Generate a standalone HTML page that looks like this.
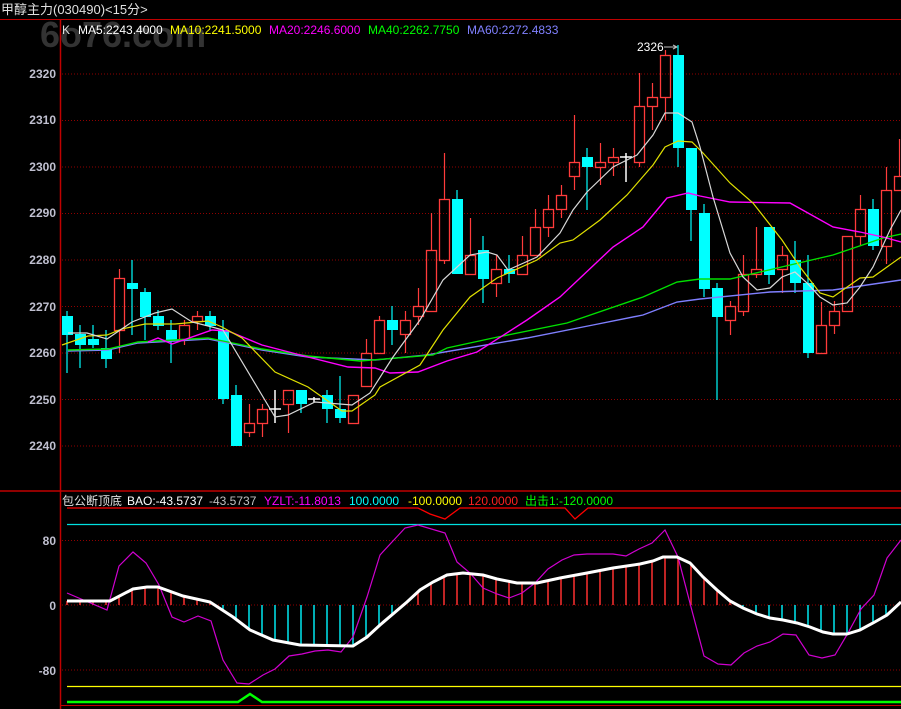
<!DOCTYPE html>
<html><head><meta charset="utf-8"><style>
html,body{margin:0;padding:0;background:#000;width:901px;height:709px;overflow:hidden}
svg{display:block}
text{font-family:"Liberation Sans","Noto Sans CJK SC",sans-serif}
</style></head><body>
<svg id="s" width="901" height="709" xmlns="http://www.w3.org/2000/svg">
<rect width="901" height="709" fill="#000"/>
<text x="40" y="47" font-size="36" fill="#333" font-weight="bold">6o76.com</text>
<text x="1" y="14" font-size="13" fill="#e0e0e0">甲醇主力(030490)&lt;15分&gt;</text>
<line x1="0" y1="19.5" x2="901" y2="19.5" stroke="#c00000"/>
<line x1="60.5" y1="19" x2="60.5" y2="709" stroke="#c00000" stroke-width="1.5"/>
<line x1="0" y1="491" x2="901" y2="491" stroke="#c00000" stroke-width="1.5"/>
<line x1="60" y1="705.5" x2="901" y2="705.5" stroke="#c00000"/>
<g font-size="12">
<text x="62" y="34" fill="#e0e0e0">K</text>
<text x="78" y="34" fill="#fff">MA5:2243.4000</text>
<text x="170" y="34" fill="#ffff00">MA10:2241.5000</text>
<text x="269" y="34" fill="#ff00ff">MA20:2246.6000</text>
<text x="368" y="34" fill="#00ff00">MA40:2262.7750</text>
<text x="467" y="34" fill="#8080ff">MA60:2272.4833</text>
</g>
<g font-size="12">
<text x="62" y="505" fill="#e0e0e0">包公断顶底</text>
<text x="127" y="505" fill="#fff">BAO:-43.5737</text>
<text x="209" y="505" fill="#c0c0c0">-43.5737</text>
<text x="264" y="505" fill="#ff00ff">YZLT:-11.8013</text>
<text x="349" y="505" fill="#00ffff">100.0000</text>
<text x="408" y="505" fill="#ffff00">-100.0000</text>
<text x="468" y="505" fill="#ff2020">120.0000</text>
<text x="525" y="505" fill="#00ff00">出击1:-120.0000</text>
</g>
<g font-size="12" font-weight="bold" fill="#c0c0d0" text-anchor="end">
<text x="56" y="78">2320</text><text x="56" y="124">2310</text><text x="56" y="171">2300</text>
<text x="56" y="217">2290</text><text x="56" y="264">2280</text><text x="56" y="311">2270</text>
<text x="56" y="357">2260</text><text x="56" y="404">2250</text><text x="56" y="450">2240</text>
<text x="56" y="545">80</text><text x="56" y="610">0</text><text x="56" y="675">-80</text>
</g>
<text x="637" y="51" font-size="12" fill="#fff">2326</text>
<line x1="664" y1="47" x2="676" y2="47" stroke="#c0c0c0"/><path d="M673 45 L677 47 L673 49" stroke="#c0c0c0" fill="none"/>
<g id="g"></g>
</svg>
<script>
var g=document.getElementById('g'),h='';
function L(x1,y1,x2,y2,c,w,d){h+='<line x1="'+x1+'" y1="'+y1+'" x2="'+x2+'" y2="'+y2+'" stroke="'+c+'" stroke-width="'+(w||1)+'"'+(d?' stroke-dasharray="'+d+'"':'')+'/>';}
function P(pts,c,w){h+='<polyline fill="none" stroke="'+c+'" stroke-width="'+(w||1)+'" points="'+pts+'"/>';}
for(var k=0;k<9;k++){var y=74+46.5*k;L(62,y,901,y,'#900000',1,'1,2');}
[540.5,605,670].forEach(function(y){L(62,y,901,y,'#900000',1,'1,2');});
L(67,524.5,901,524.5,'#00e0e0',1.3);
L(67,686.5,901,686.5,'#ffff00',1.3);
P('67,702 238,702 250,694 262,702 901,702','#00ff00',2.5);
P('67,508 418,508 430,514 445,519 460,508 565,508 575,519 588,508 901,508','#ff0000',1.3);
var C=[[316,335,311,373,'c'],[334,345,325,368,'c'],[339,345,325,348,'c'],[348,359,330,368,'c'],[278,330,269,353,'r'],[283,289,260,335,'c'],[292,317,288,340,'c'],[316,326,310,330,'c'],[330,340,320,363,'c'],[325,339,320,345,'r'],[316,321,311,330,'r'],[316,326,311,330,'c'],[330,399,320,404,'c'],[395,446,385,446,'c'],[423,432,404,437,'r'],[409,423,404,437,'r'],[409,409,390,423,'w'],[390,404,390,433,'r'],[390,404,390,413,'c'],[399,399,397,402,'w'],[395,409,390,423,'c'],[409,418,376,423,'c'],[395,423,395,423,'r'],[353,386,339,386,'r'],[320,353,316,353,'r'],[320,330,306,345,'c'],[320,334,311,353,'r'],[306,316,288,325,'r'],[250,311,213,311,'r'],[199,260,153,264,'r'],[199,274,190,274,'c'],[255,274,218,274,'r'],[250,279,236,303,'c'],[269,283,255,297,'r'],[269,274,255,283,'c'],[255,274,236,274,'r'],[227,255,209,255,'r'],[209,227,195,237,'r'],[195,209,185,218,'r'],[162,176,115,190,'r'],[157,167,148,210,'c'],[162,167,143,185,'r'],[157,162,148,176,'r'],[157,157,153,182,'w'],[106,162,73,167,'r'],[97,106,83,130,'r'],[55,97,50,120,'r'],[55,148,45,167,'c'],[148,210,148,241,'c'],[213,289,204,297,'c'],[288,317,283,400,'c'],[306,320,301,335,'r'],[274,311,255,316,'r'],[269,274,227,278,'r'],[227,275,227,284,'c'],[255,269,246,293,'r'],[260,283,241,293,'c'],[283,353,255,358,'c'],[325,353,302,353,'r'],[311,325,301,334,'r'],[236,311,236,311,'r'],[209,236,195,246,'r'],[209,246,199,250,'c'],[190,246,167,264,'r'],[176,190,139,190,'r']];
C.forEach(function(c,i){var x=67+13*i;
 if(c[4]=='c'){L(x,c[2],x,c[3],'#00ffff',1.2);h+='<rect x="'+(x-5)+'" y="'+c[0]+'" width="11" height="'+Math.max(1,c[1]-c[0])+'" fill="#00ffff"/>';}
 else if(c[4]=='r'){L(x+0.5,c[2],x+0.5,c[0],'#ff3b3b',1.2);L(x+0.5,c[1],x+0.5,c[3],'#ff3b3b',1.2);h+='<rect x="'+(x-4.5)+'" y="'+(c[0]+0.5)+'" width="10" height="'+Math.max(1,c[1]-c[0])+'" fill="none" stroke="#ff3b3b" stroke-width="1.3"/>';}
 else{L(x,c[2],x,c[3],'#fff',1.5);L(x-6,c[0],x+6,c[0],'#fff',1.5);}
});
P('68,351 108,350 138,343 175,341 208,339 228,343 262,350 308,357 375,360 427,355 527,338 593,325 643,315 677,302 700,299 770,292 833,290 901,280','#7f7fff',1.4);
P('68,350 108,349 138,342 175,340 208,338 228,342 262,349 308,356 360,361 433,355 447,348 493,338 567,323 643,297 677,282 700,279 730,279 833,255 883,238 901,234','#00e000',1.4);
P('148,342 158,338 172,344 212,330 228,331 262,345 308,357 348,367 375,368 390,373 418,372 447,361 477,352 527,320 560,297 613,247 643,227 667,198 688,193 700,196 730,202 790,203 833,227 860,232 883,237 901,242','#ff00ff',1.4);
P('62,345 88,336 107,335 122,329 145,324 175,324 208,321 222,327 242,338 275,372 308,387 342,411 352,411 375,395 380,387 420,365 443,330 470,297 497,278 537,260 560,243 573,240 600,220 627,195 653,165 665,147 678,141 692,142 703,153 730,183 753,203 782,240 800,267 820,293 833,297 860,278 873,277 901,257','#e0e000',1.2);
P('68,333 87,333 107,339 132,322 155,313 172,309 192,322 212,327 223,330 275,417 288,415 315,402 352,405 370,393 393,357 420,320 443,280 470,255 487,252 497,255 508,270 537,257 560,233 573,210 587,192 613,167 637,155 653,135 665,113 678,113 692,122 700,147 713,197 730,253 743,277 757,290 770,288 782,277 795,272 807,283 820,297 833,305 847,303 860,287 873,267 890,230 901,210','#d8d8d8',1.2);
var B=[[67,601],[110,601],[133,589],[147,587],[158,587],[183,596],[210,602],[233,617],[250,630],[273,640],[300,645],[353,646],[367,637],[380,625],[407,602],[420,590],[433,582],[447,575],[463,573],[483,575],[497,579],[517,583],[537,583],[560,578],[587,573],[613,568],[640,564],[653,561],[663,557],[677,557],[690,563],[703,577],[717,590],[730,601],[743,608],[757,614],[770,618],[783,620],[797,623],[810,627],[823,632],[833,634],[847,634],[860,630],[873,623],[887,615],[901,602]];
function bv(x){for(var j=1;j<B.length;j++){if(x<=B[j][0]){var a=B[j-1],b=B[j];return a[1]+(b[1]-a[1])*(x-a[0])/(b[0]-a[0]);}}return B[B.length-1][1];}
for(var i=0;i<65;i++){var x=67+13*i,v=bv(x);if(Math.abs(v-605)>1)L(x,605,x,v,v<605?'#ff3030':'#00e8f0',1.5);}
P('67,593 107,610 119,566 133,552 146,563 159,585 172,617 184,622 198,616 211,621 223,660 237,683 249,684 263,675 275,669 289,656 302,654 315,651 328,650 341,652 353,637 367,597 380,555 405,528 418,525 445,533 450,545 457,562 470,573 483,588 497,594 509,598 522,593 535,583 548,569 562,560 574,555 587,554 613,554 626,556 639,549 652,543 665,530 678,557 691,607 704,656 718,664 731,665 744,653 757,646 770,642 783,634 796,635 809,655 822,658 835,655 848,633 861,609 874,595 887,558 901,540','#d000d0',1.2);
h+='<polyline fill="none" stroke="#fff" stroke-width="3" points="'+B.map(function(p){return p.join(',')}).join(' ')+'"/>';
g.innerHTML=h;
</script>
</body></html>
